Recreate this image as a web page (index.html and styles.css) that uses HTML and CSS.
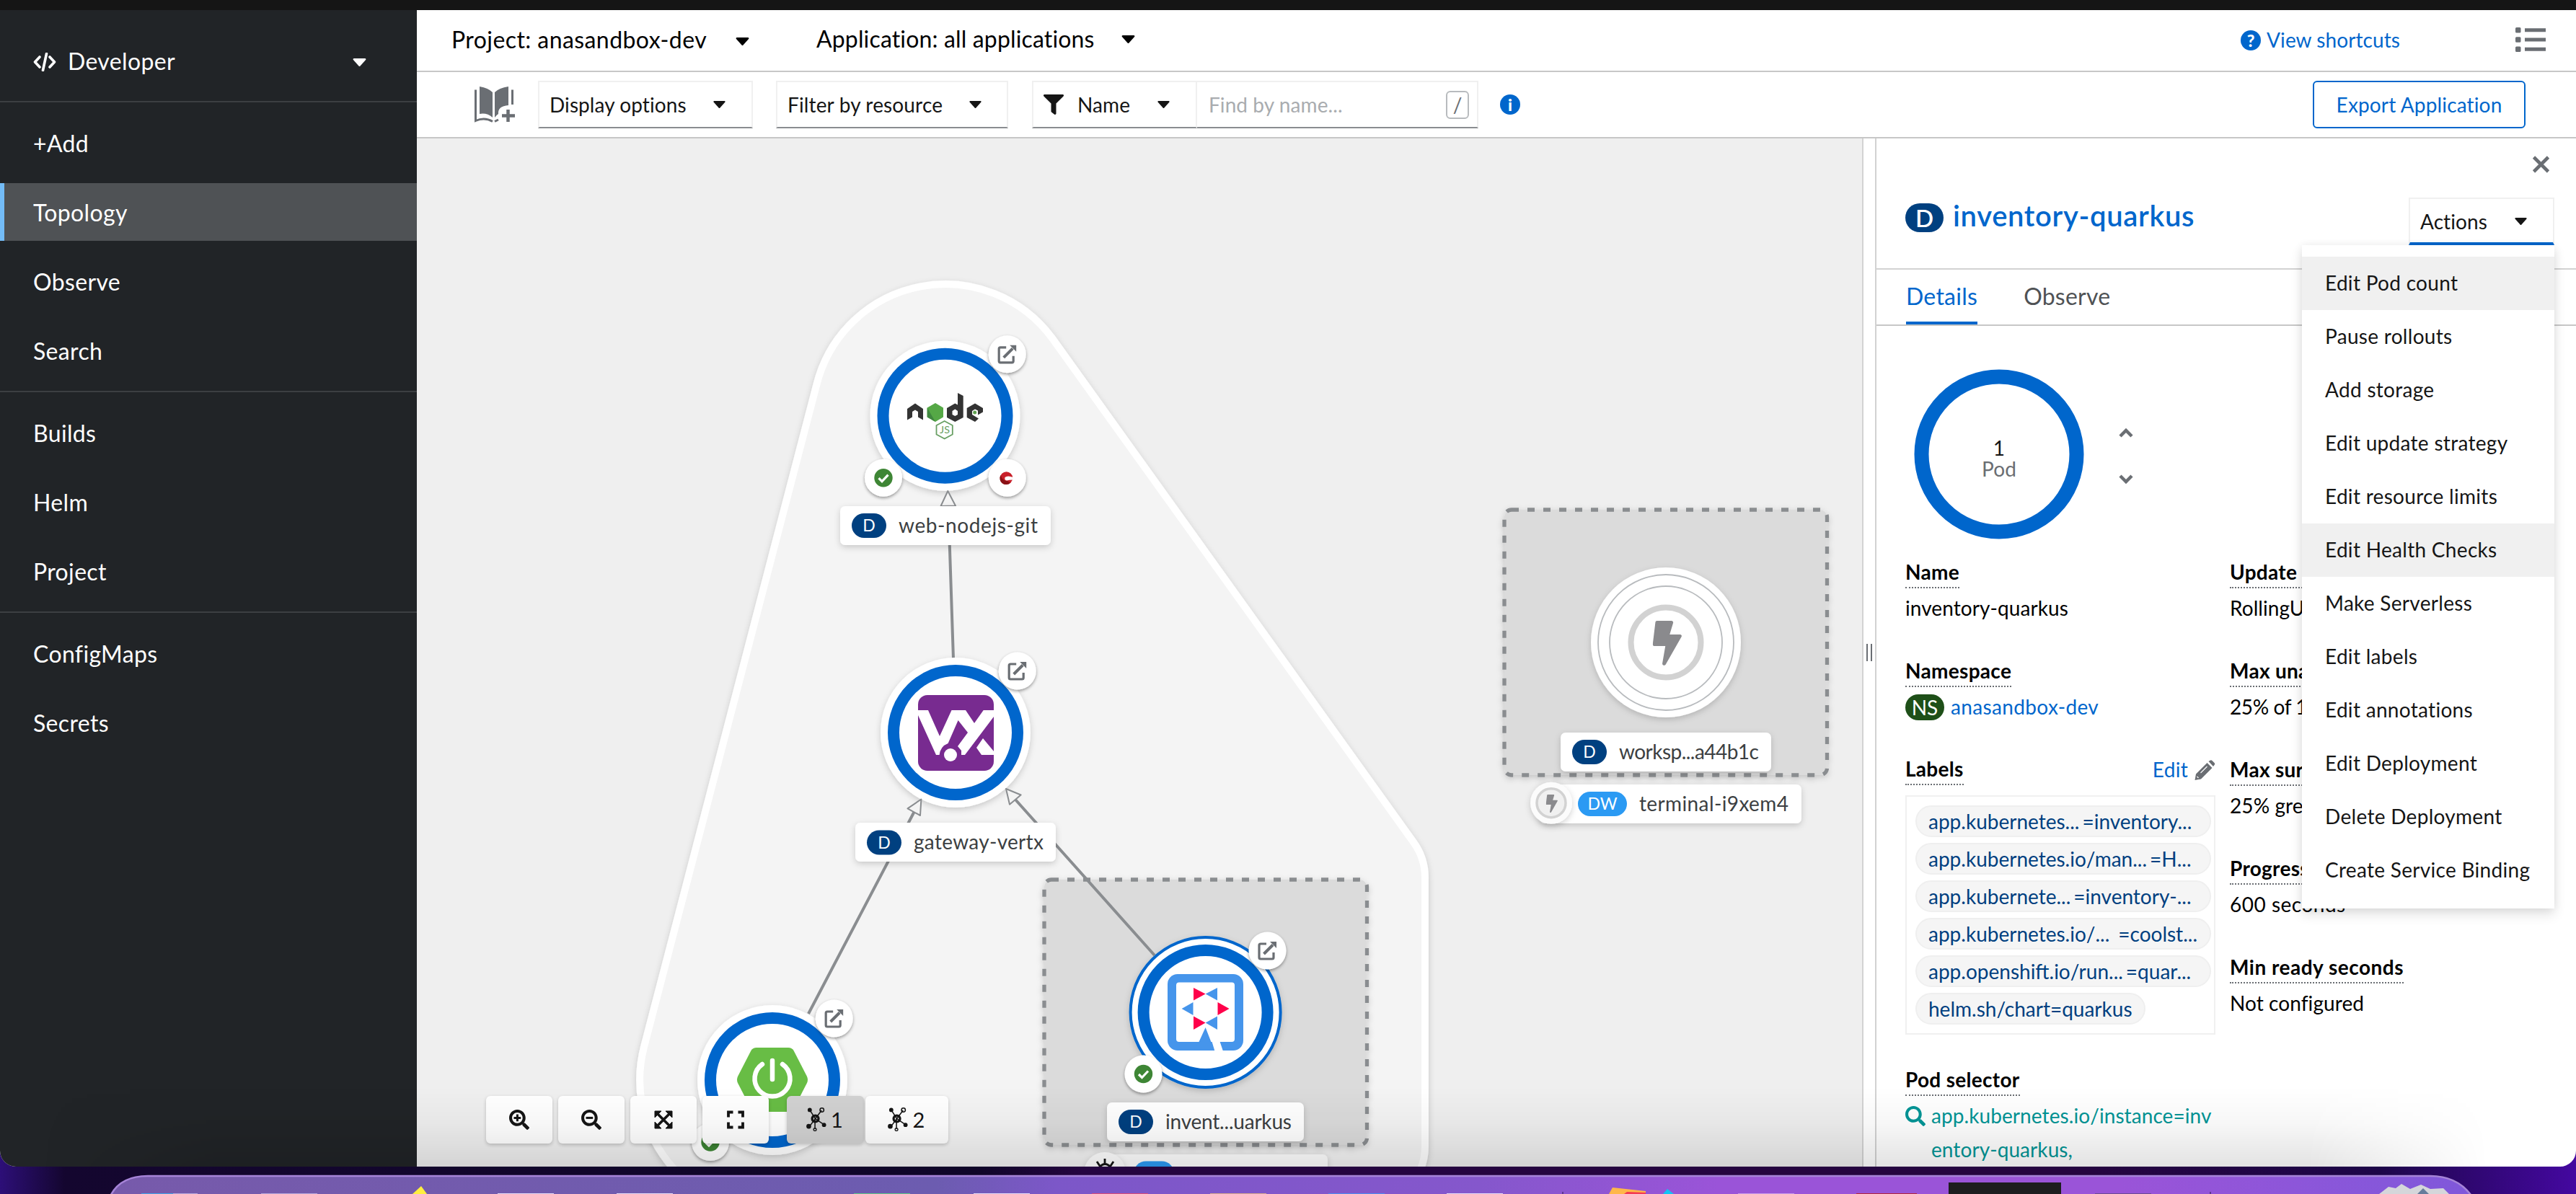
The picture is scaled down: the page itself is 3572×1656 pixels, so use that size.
FILE: index.html
```html
<!DOCTYPE html>
<html lang="en">
<head>
<meta charset="utf-8">
<title>Topology</title>
<link rel="stylesheet" href="styles.css">
</head>
<body>
<svg class="defs" width="0" height="0">
  <defs>
    <symbol id="caret" viewBox="0 0 18 11"><path d="M1.200 0H16.800Q18.500 .4 17.600 2L10 10.400Q9 11.500 8 10.400L.4 2Q-.5 .4 1.200 0Z" fill="currentColor"/></symbol>
    <symbol id="lens" viewBox="0 0 512 512"><path fill="currentColor" d="M505 442.700L405.300 343c-4.500-4.500-10.600-7-17-7H372c27.600-35.300 44-79.700 44-128C416 93.100 322.900 0 208 0S0 93.100 0 208s93.100 208 208 208c48.300 0 92.700-16.400 128-44v16.300c0 6.400 2.500 12.500 7 17l99.700 99.700c9.400 9.400 24.600 9.400 33.900 0l28.300-28.300c9.400-9.400 9.400-24.600.1-34zM208 341c-73 0-133-60-133-133 0-73 60-133 133-133 73 0 133 60 133 133 0 73-60 133-133 133z"/></symbol>
    <symbol id="bolt" viewBox="0 0 40 62"><path fill="currentColor" d="M6 0h20c1.600 0 2.800 1.400 2.300 3L23.500 19H38c1.700 0 2.700 1.800 1.800 3.300L18 60.500c-1.500 2.500-5.200 1-4.600-1.700L17.500 35H2.200C.9 35-.1 33.800 0 32.500L3.700 2C3.800.9 4.800 0 6 0z"/></symbol>
    <g id="link">
      <circle r="26" fill="#fff" filter="url(#lift)"/>
      <path d="M-1.500-9.500H-9.500a2 2 0 0 0-2 2V9.500a2 2 0 0 0 2 2H6.500a2 2 0 0 0 2-2V2.500" fill="none" stroke="#6a6e73" stroke-width="3.200"/>
      <path d="M-5 4.500L7.500-8" stroke="#6a6e73" stroke-width="4"/>
      <path d="M3.500-12.500h9v9z" fill="#6a6e73"/>
    </g>
    <g id="ok">
      <circle r="26" fill="#fff" filter="url(#lift)"/>
      <circle r="12.700" fill="#3e8635"/>
      <path d="M-6.500 .5L-2 5L6.500-4" fill="none" stroke="#fff" stroke-width="3.200"/>
    </g>
    <g id="molecule">
      <path d="M13 17L5 4.500M13 17L22 5M13 17L4 29M13 17L26 26M12.500 17V32" stroke="#151515" stroke-width="1.600"/>
      <circle cx="13" cy="17" r="4.600" fill="none" stroke="#151515" stroke-width="3.400"/>
      <circle cx="5" cy="4.500" r="3" fill="#151515"/><circle cx="22.500" cy="4.500" r="2.800" fill="none" stroke="#151515" stroke-width="1.600"/>
      <circle cx="3.600" cy="28" r="3.400" fill="#151515"/><circle cx="25.500" cy="26" r="3" fill="#151515"/>
      <circle cx="12.500" cy="32.500" r="2" fill="none" stroke="#151515" stroke-width="1.400"/>
    </g>
    <filter id="lift" x="-30%" y="-30%" width="160%" height="160%"><feDropShadow dx="0" dy="2" stdDeviation="2" flood-color="#030303" flood-opacity=".4"/></filter>
    <filter id="soft" x="-20%" y="-20%" width="140%" height="150%"><feDropShadow dx="0" dy="3" stdDeviation="4" flood-color="#030303" flood-opacity=".18"/></filter>
  </defs>
</svg>

<div class="topbar"></div>
<div class="window">
  <nav class="sidebar">
    <div class="perspective">
      <svg class="code-icon" viewBox="0 0 32 26"><path d="M9 6L2.500 13L9 20M23 6L29.500 13L23 20M18.500 1.500L13.500 24.500" fill="none" stroke="#fff" stroke-width="3.600" stroke-linecap="round" stroke-linejoin="round"/></svg>
      <span class="perspective-name">Developer</span>
      <svg class="caret big"><use href="#caret"/></svg>
    </div>
    <ul class="nav-section"><li>+Add</li><li class="current">Topology</li><li>Observe</li><li>Search</li></ul>
    <ul class="nav-section"><li>Builds</li><li>Helm</li><li>Project</li></ul>
    <ul class="nav-section"><li>ConfigMaps</li><li>Secrets</li></ul>
  </nav>

  <main class="main">
    <header class="context-bar">
      <span class="project">Project: anasandbox-dev</span><svg class="caret big"><use href="#caret"/></svg>
      <span class="application">Application: all applications</span><svg class="caret big second"><use href="#caret"/></svg>
      <a class="shortcuts"><span class="round-icon">?</span><span>View shortcuts</span></a>
      <svg class="list-icon" viewBox="0 0 42 34"><path d="M0 1.500Q0 0 1.500 0H6Q7.500 0 7.500 1.500V6Q7.500 7.500 6 7.500H1.500Q0 7.500 0 6ZM0 14.700Q0 13.200 1.500 13.200H6Q7.500 13.200 7.500 14.700V19.200Q7.500 20.700 6 20.700H1.500Q0 20.700 0 19.200ZM0 28Q0 26.500 1.500 26.500H6Q7.500 26.500 7.500 28V32.500Q7.500 34 6 34H1.500Q0 34 0 32.500ZM13 1.200H42V6.300H13ZM13 14.400H42V19.500H13ZM13 27.700H42V32.800H13Z" fill="#6a6e73"/></svg>
    </header>

    <div class="toolbar">
      <svg class="catalog-icon" viewBox="0 0 56 50"><path d="M7 0Q19 2 25 8V43Q17 36 7 38ZM47 0Q34 2 28 8V43Q30 40 33 38Q32 27 47 26Z" fill="#6a6e73"/><path d="M1.500 4.500V47.500Q14 42 25 48.500M52.500 4.500V25M28 48.500L33 46" fill="none" stroke="#6a6e73" stroke-width="3"/><path d="M46.500 32V49M38 40.500H56" stroke="#6a6e73" stroke-width="4.500"/></svg>
      <div class="select display"><span>Display options</span><svg class="caret"><use href="#caret"/></svg></div>
      <div class="select resource"><span>Filter by resource</span><svg class="caret"><use href="#caret"/></svg></div>
      <div class="search-group">
        <div class="select kind"><svg class="funnel" viewBox="0 0 28 28"><path d="M1.300 0H26.700C28 0 28.500 1.500 27.600 2.400L17.500 12.500V26.500C17.500 27.700 16.100 28.400 15.200 27.700L11 24.500Q10.500 24 10.500 23.500V12.500L.4 2.400C-.5 1.500 0 0 1.300 0Z" fill="#151515"/></svg><span>Name</span><svg class="caret"><use href="#caret"/></svg></div>
        <div class="find"><span>Find by name...</span><kbd>/</kbd></div>
      </div>
      <span class="round-icon info">i</span>
      <button class="export">Export Application</button>
    </div>

    <div class="content">
      <section class="canvas">
        <svg class="graph" viewBox="578 192 2004 1426">
          <path d="M1133 531A184 184 0 0 1 1459 469L1960 1168A84 84 0 0 1 1976 1217V1590A84 84 0 0 1 1892 1674L1071 1682A184 184 0 0 1 893 1452Z" fill="#f4f4f4" stroke="#fff" stroke-width="10" filter="url(#soft)"/>

          <g fill="#dbdbdb" stroke="#8a8d90" stroke-width="5.300" stroke-dasharray="10 12" filter="url(#soft)">
            <rect x="1448" y="1220" width="447.500" height="368" rx="10"/>
            <rect x="2086" y="707" width="447.500" height="368" rx="10"/>
          </g>

          <g class="edges">
            <path d="M1322 914L1315 702M1121 1406L1267.600 1126M1601 1325L1408 1109"/>
          </g>

          <!-- web-nodejs-git -->
          <circle cx="1310.500" cy="576.700" r="104" fill="#fff" filter="url(#soft)"/>
          <circle cx="1310.500" cy="576.700" r="86" fill="none" stroke="#06c" stroke-width="16"/>
          <g fill="#333">
            <path d="M1258 567L1269 559.500L1280 567V582.500L1273 578.500V571L1269 568.500L1265 571V578.500L1258 582.500Z"/>
            <path fill-rule="evenodd" d="M1328 545L1335.700 549V579L1324.300 585L1313 579V566L1324.300 559.500L1328 561.500ZM1324.300 567.500L1320.500 570V575L1324.300 577L1328 575V570Z"/>
            <path d="M1352 559.500L1363 566V571.500L1356 575.500V569.500L1352 567.500L1348 570V575L1357 580.500L1352 585L1340.700 579V566Z"/>
          </g>
          <path d="M1297 559L1308 565.500V578.500L1297 585L1285.700 578.500V565.500Z" fill="#55a846"/>
          <path d="M1285.700 565.500L1297 585L1285.700 578.500Z" fill="#3f873f"/>
          <circle cx="1351.700" cy="572" r="2.500" fill="#5fa04e"/>
          <path d="M1309.700 584L1320.800 590V602.500L1309.700 608.500L1298.500 602.500V590Z" fill="#fff" stroke="#689f63" stroke-width="1.800"/>
          <text x="1303" y="601" font-size="13" fill="#689f63" textLength="14" lengthAdjust="spacingAndGlyphs">JS</text>
          <use href="#link" x="1396.700" y="491.300"/>
          <use href="#ok" x="1225" y="662.700"/>
          <circle cx="1396.700" cy="662.700" r="26" fill="#fff" filter="url(#lift)"/>
          <circle cx="1395.500" cy="663" r="8.700" fill="#c9202a"/>
          <path d="M1387.500 659A8.700 8.700 0 0 0 1401 669.700L1397 667Q1390 667 1387.500 659Z" fill="#8a1216"/>
          <path d="M1405 662Q1397 659 1393.500 662Q1392.500 666 1396 666.500Q1399 665.500 1404 665.500Z" fill="#fff"/>

          <!-- gateway-vertx -->
          <circle cx="1325" cy="1016" r="104" fill="#fff" filter="url(#soft)"/>
          <circle cx="1325" cy="1016" r="86" fill="none" stroke="#06c" stroke-width="16"/>
          <rect x="1273" y="964" width="105" height="105" rx="13" fill="#782b90"/>
          <path d="M1273 985H1287L1303 1021L1319.500 985H1339L1351 1003L1363.700 985H1378V994L1338 1047H1333V1041L1328 1035L1342 1016L1328.600 999L1314.600 1031Q1304 1035 1302.600 1047H1298L1273 992ZM1363 1024L1378 1042V1047H1361L1354 1037Z" fill="#fff"/>
          <circle cx="1318" cy="1047" r="9" fill="#fff"/>
          <use href="#link" x="1410.700" y="930.500"/>

          <!-- catalog-spring -->
          <circle cx="1071" cy="1498" r="104" fill="#fff" filter="url(#soft)"/>
          <circle cx="1071" cy="1498" r="86" fill="none" stroke="#06c" stroke-width="16"/>
          <path d="M1049 1453H1093Q1098 1453 1100.500 1457L1119 1493Q1121 1497.500 1119 1502L1100.500 1538Q1098 1542 1093 1542H1049Q1044 1542 1041.500 1538L1023 1502Q1021 1497.500 1023 1493L1041.500 1457Q1044 1453 1049 1453Z" fill="#68bd45"/>
          <path d="M1057 1476A24.500 24.500 0 1 0 1085 1476M1071 1471V1497" fill="none" stroke="#fff" stroke-width="6.500" stroke-linecap="round"/>
          <use href="#link" x="1156.700" y="1412.500"/>
          <use href="#ok" x="985" y="1584"/>

          <!-- inventory-quarkus -->
          <circle cx="1671.600" cy="1404" r="104" fill="#fff" stroke="#06c" stroke-width="4" filter="url(#soft)"/>
          <circle cx="1671.600" cy="1404" r="86" fill="none" stroke="#06c" stroke-width="16"/>
          <rect x="1619" y="1351" width="105" height="106" rx="14" fill="#4695eb"/>
          <rect x="1631" y="1362.500" width="81" height="82.500" rx="4" fill="#fff"/>
          <path d="M1671.600 1425L1684 1457H1655L1662.500 1445Z" fill="#4695eb"/>
          <path d="M1686.500 1443H1691L1696 1458H1684.500L1680 1443Z" fill="#fff"/>
          <path d="M1655 1370V1387.500L1671.600 1378.500ZM1704.600 1399L1688.500 1390V1408ZM1655 1409.500V1428L1671.600 1418.500Z" fill="#ff004a"/>
          <path d="M1688 1370V1387.500L1671.600 1378.500ZM1638.600 1399L1654.500 1390V1408ZM1688 1409.500V1428L1671.600 1418.500Z" fill="#4695eb"/>
          <use href="#link" x="1757.500" y="1318.500"/>
          <use href="#ok" x="1585.500" y="1489.500"/>

          <!-- workspace terminal -->
          <circle cx="2310" cy="891" r="104" fill="#fff" filter="url(#soft)"/>
          <g fill="none" stroke="#b8bbbe" stroke-width="1.800"><circle cx="2310" cy="891" r="94"/><circle cx="2310" cy="891" r="78"/></g>
          <circle cx="2310" cy="891" r="48.500" fill="none" stroke="#d2d2d2" stroke-width="8"/>
          <svg x="2291.500" y="861" width="40.500" height="62" color="#8a8a8d"><use href="#bolt"/></svg>

          <g class="arrows">
            <path d="M1314.300 681L1325 701.500L1304.500 702ZM1277.400 1108.500L1276 1131L1258.500 1121.400ZM1395 1094L1415.600 1102.500L1400 1115.700Z"/>
          </g>

          <g fill="#fff" filter="url(#soft)">
            <rect x="1165" y="702" width="292" height="54" rx="7"/>
            <rect x="1186" y="1141" width="278" height="54" rx="7"/>
            <rect x="1535" y="1529" width="273" height="54" rx="7"/>
            <rect x="2164" y="1016" width="292" height="54" rx="7"/>
            <rect x="2135" y="1088" width="363" height="54" rx="7"/>
            <rect x="1530" y="1601" width="311" height="54" rx="7"/>
          </g>
          <circle cx="2151" cy="1113.700" r="29" fill="#fcfcfc" filter="url(#soft)"/>
          <circle cx="2151" cy="1113.700" r="20" fill="#f0f0f0" stroke="#d2d2d2" stroke-width="3.500"/>
          <svg x="2143.500" y="1102" width="16.500" height="25" color="#8a8a8d"><use href="#bolt"/></svg>
          <circle cx="1532" cy="1627" r="29" fill="#fff" filter="url(#soft)"/>
          <path d="M1523 1621Q1532 1608 1542 1621M1532 1607V1616M1521 1611L1525 1617M1544 1611L1540 1617" fill="none" stroke="#151515" stroke-width="2.800"/>
          <g fill="#004080">
            <rect x="1181" y="712" width="48" height="34" rx="17"/>
            <rect x="1202" y="1151.500" width="48" height="34" rx="17"/>
            <rect x="1551" y="1539" width="48" height="34" rx="17"/>
            <rect x="2180" y="1026" width="48" height="34" rx="17"/>
          </g>
          <rect x="2188" y="1098" width="68" height="34" rx="17" fill="#2b9af3"/>
          <rect x="1572" y="1610.500" width="56" height="34" rx="17" fill="#2b9af3"/>
          <g class="badge-text">
            <text x="1205" y="737">D</text><text x="1226" y="1176.500">D</text><text x="1575" y="1564">D</text><text x="2204" y="1051">D</text><text x="2222" y="1123">DW</text>
          </g>
          <g class="label-text">
            <text x="1246" y="739" textLength="193">web-nodejs-git</text>
            <text x="1267" y="1178" textLength="180">gateway-vertx</text>
            <text x="1616" y="1566" textLength="175">invent...uarkus</text>
            <text x="2245" y="1053" textLength="194">worksp...a44b1c</text>
            <text x="2273" y="1125" textLength="207">terminal-i9xem4</text>
          </g>
        </svg>

        <div class="controls">
          <button><svg viewBox="0 0 28 28"><use href="#lens" width="28" height="28"/><path d="M11.400 6.500V16.200M6.500 11.400H16.200" stroke="#151515" stroke-width="3"/></svg></button>
          <button><svg viewBox="0 0 28 28"><use href="#lens" width="28" height="28"/><path d="M6.500 11.400H16.200" stroke="#151515" stroke-width="3"/></svg></button>
          <button><svg viewBox="0 0 28 28"><path d="M5 5L23 23M23 5L5 23" stroke="#151515" stroke-width="3.600"/><path d="M2 2H11L2 11ZM26 2H17L26 11ZM2 26H11L2 17ZM26 26H17L26 17Z" fill="#151515" stroke="#151515" stroke-linejoin="round"/></svg></button>
          <button><svg viewBox="0 0 28 28"><path d="M4 10.500V3.500H10.500M17.500 3.500H24V10.500M24 17.500V24.500H17.500M10.500 24.500H4V17.500" fill="none" stroke="#151515" stroke-width="3.800"/></svg></button>
          <button class="layout on"><svg viewBox="0 0 29 35"><use href="#molecule"/></svg>1</button>
          <button class="layout"><svg viewBox="0 0 29 35"><use href="#molecule"/></svg>2</button>
        </div>
      </section>

      <div class="splitter"><i></i></div>

      <aside class="panel">
        <div class="panel-top"><svg class="close" viewBox="0 0 24 24"><path d="M2 2L22 22M22 2L2 22" stroke="#6a6e73" stroke-width="4.600"/></svg></div>
        <div class="panel-head">
          <span class="badge d">D</span>
          <h1>inventory-quarkus</h1>
          <div class="actions">
            <div class="actions-toggle"><span>Actions</span><svg class="caret"><use href="#caret"/></svg></div>
            <ul class="menu">
              <li class="hover">Edit Pod count</li><li>Pause rollouts</li><li>Add storage</li><li>Edit update strategy</li><li>Edit resource limits</li><li class="hover">Edit Health Checks</li><li>Make Serverless</li><li>Edit labels</li><li>Edit annotations</li><li>Edit Deployment</li><li>Delete Deployment</li><li>Create Service Binding</li>
            </ul>
          </div>
        </div>
        <div class="tabs"><span class="active">Details</span><span>Observe</span></div>
        <div class="panel-body">
          <svg class="pod" viewBox="0 0 330 320">
            <circle cx="130" cy="178" r="107.500" fill="none" stroke="#06c" stroke-width="20"/>
            <text x="130" y="180" fill="#151515">1</text><text x="130" y="209" fill="#6a6e73">Pod</text>
            <path d="M298 153L306 145L314 153M298 208L306 216L314 208" fill="none" stroke="#6a6e73" stroke-width="4.500"/>
          </svg>
          <div class="details">
            <dl>
              <dt><span>Name</span></dt><dd>inventory-quarkus</dd>
              <dt><span>Namespace</span></dt><dd class="ns"><span class="badge n">NS</span><a>anasandbox-dev</a></dd>
              <dt class="with-edit"><span>Labels</span><a>Edit <svg viewBox="0 0 28 28"><path d="M0 28L1.500 19.500L17 4L24 11L8.500 26.500ZM19 2L21 .8Q22.500-.5 24 1L27 4Q28.500 5.500 27 7L25.500 9Z" fill="#6a6e73"/><path d="M8 18L17 9M3 23L5 25" stroke="#fff" stroke-width="1.100"/></svg></a></dt>
              <dd class="labels">
                <span class="chip full"><b>app.kubernetes...</b><b>=inventory...</b></span>
                <span class="chip full"><b>app.kubernetes.io/man...</b><b>=H...</b></span>
                <span class="chip full"><b>app.kubernete...</b><b>=inventory-...</b></span>
                <span class="chip full wide"><b>app.kubernetes.io/...</b><b>=coolst...</b></span>
                <span class="chip full"><b>app.openshift.io/run...</b><b>=quar...</b></span>
                <span class="chip"><b>helm.sh/chart=quarkus</b></span>
              </dd>
              <dt><span>Pod selector</span></dt>
              <dd class="selector"><svg><use href="#lens"/></svg><a>app.kubernetes.io/instance=inv<br>entory-quarkus,</a></dd>
            </dl>
            <dl>
              <dt><span>Update strategy</span></dt><dd>RollingUpdate</dd>
              <dt><span>Max unavailable</span></dt><dd class="tight">25% of 1 pod</dd>
              <dt><span>Max surge</span></dt><dd>25% greater than 1 pod</dd>
              <dt><span>Progress deadline</span></dt><dd class="loose">600 seconds</dd>
              <dt><span class="loose">Min ready seconds</span></dt><dd>Not configured</dd>
            </dl>
          </div>
        </div>
      </aside>
    </div>
  </main>
</div>

<footer class="desktop">
  <svg viewBox="0 0 3572 38">
    <defs><linearGradient id="dock"><stop offset="0" stop-color="#775aab"/><stop offset=".35" stop-color="#6c5cb0"/><stop offset=".4" stop-color="#7c57c8"/><stop offset=".58" stop-color="#8557cc"/><stop offset=".68" stop-color="#9a54d8"/><stop offset=".85" stop-color="#9a54d8"/><stop offset="1" stop-color="#7f58da"/></linearGradient></defs>
    <path d="M150 48Q162 13 205 13H3370Q3412 13 3432 48Z" fill="url(#dock)" stroke="#a684d8" stroke-width="2.500"/>
    <path d="M572 38L584 27L592 38Z" fill="#ffef3f"/>
    <path d="M2231 38L2236 29L2282 34V38Z" fill="#ffb74a"/><path d="M2256 35L2282 36V38H2252Z" fill="#f33b55"/><path d="M2306 38L2312 31L2321 38Z" fill="#12c4f4"/>
    <rect x="2702" y="22" width="156" height="16" fill="#1d1d1f"/>
    <path d="M3299 38L3312 28L3322 30L3330 24L3342 31L3357 25L3370 31L3388 30L3396 38Z" fill="#d5d6da"/><path d="M3352 38L3360 30L3368 38Z" fill="#667c9c"/>
    <g><rect x="196" y="37" width="44" height="1" fill="#42a5e8"/><rect x="240" y="37" width="34" height="1" fill="#b7a8dc"/><rect x="362" y="37" width="78" height="1" fill="#b7a8dc"/><rect x="690" y="37" width="78" height="1" fill="#e6dcf8"/><rect x="855" y="37" width="78" height="1" fill="#e6dcf8"/><rect x="1184" y="37" width="78" height="1" fill="#5fc987"/><rect x="1350" y="37" width="78" height="1" fill="#e6dcf8"/><rect x="1514" y="37" width="78" height="1" fill="#de4f77"/><rect x="1678" y="37" width="78" height="1" fill="#d9ac8d"/><rect x="1842" y="37" width="78" height="1" fill="#4d8df0"/><rect x="2006" y="37" width="78" height="1" fill="#e6dcf8"/><rect x="2410" y="37" width="78" height="1" fill="#c99bea"/><rect x="2574" y="37" width="84" height="1" fill="#b3243c"/><rect x="2905" y="37" width="78" height="1" fill="#6b4a94"/><rect x="2166" y="35" width="2" height="3" fill="#5d3690"/><rect x="3064" y="35" width="2" height="3" fill="#5d3690"/></g>
  </svg>
</footer>
</body>
</html>
```
FILE: styles.css
```css
* { box-sizing: border-box; }
body {
  margin: 0;
  width: 3572px;
  height: 1656px;
  overflow: hidden;
  display: flex;
  flex-direction: column;
  background: linear-gradient(90deg, #2d0f78 0, #14062f 90px, #0f0628 1350px, #250540 1500px, #250540 2900px, #1d0648 3300px, #4408a0 3572px);
  font: 28px/42px Lato, sans-serif;
  letter-spacing: 0.08px;
  color: #151515;
}
ul, dl, dd, h1 { margin: 0; padding: 0; list-style: none; }
svg { display: block; flex: none; }
button { font: inherit; letter-spacing: inherit; color: inherit; }
.defs { position: absolute; }
a { color: #06c; }

.topbar { height: 14px; background: #151515; flex: none; }
.window {
  position: relative;
  height: 1604px;
  flex: none;
  display: flex;
  border-radius: 0 0 22px 22px;
  overflow: hidden;
  background: #fff;
}
/* shade along the lower edge of the window */
.window::after {
  content: "";
  position: absolute;
  inset: auto 0 0 0;
  height: 110px;
  background: linear-gradient(rgba(0,0,0,0), rgba(0,0,0,.03) 45%, rgba(0,0,0,.11));
  -webkit-mask-image: linear-gradient(90deg, transparent 60px, #000 300px, #000 3200px, transparent 3450px);
  mask-image: linear-gradient(90deg, transparent 60px, #000 300px, #000 3200px, transparent 3450px);
  pointer-events: none;
}

.caret { width: 17px; height: 10px; }
.caret.big { width: 19px; height: 11px; }

.sidebar { width: 578px; flex: none; background: #212427; color: #fff; font-size: 32px; letter-spacing: 0.35px; }
.perspective { height: 126px; display: flex; align-items: flex-start; padding: 30px 70px 0 46px; }
.code-icon { width: 32px; height: 26px; margin-top: 29px; }
.perspective-name { margin-left: 16px; line-height: 82px; }
.perspective .caret { margin: 37px 0 0 auto; }
.nav-section { border-top: 2px solid #3c3f42; padding: 16px 0; display: flex; flex-direction: column; gap: 16px; }
.nav-section li { height: 80px; line-height: 82px; padding-left: 46px; }
.nav-section .current { background: #4f5255; box-shadow: inset 6px 0 #73bcf7; }

.main { flex: 1; min-width: 0; display: flex; flex-direction: column; }
.context-bar { height: 86px; border-bottom: 2px solid #c7c7c7; display: flex; align-items: flex-start; padding: 0 42px 0 48px; font-size: 32px; color: #000; }
.project { width: 394px; line-height: 82px; letter-spacing: 0.42px; }
.application { width: 423px; margin-left: 93px; line-height: 79px; letter-spacing: 0.15px; }
.context-bar .caret { margin-top: 38px; }
.context-bar .second { margin-top: 35px; }
.shortcuts { margin-left: auto; display: flex; gap: 8px; font-size: 28px; line-height: 83px; }
.round-icon { width: 28px; height: 28px; border-radius: 50%; background: #06c; color: #fff; font: 900 23px/28px Lato, sans-serif; text-align: center; letter-spacing: 0; }
.shortcuts .round-icon { margin-top: 28px; }
.list-icon { width: 42px; height: 34px; margin: 24px 0 0 160px; }

.toolbar { height: 92px; border-bottom: 2px solid #c7c7c7; display: flex; align-items: flex-start; padding: 12px 70px 0 80px; }
.catalog-icon { width: 56px; height: 50px; margin: 8px 32px 0 0; }
.select { height: 66px; border: 2px solid #f0f0f0; border-bottom-color: #8a8d90; display: flex; align-items: center; justify-content: space-between; padding: 0 36px 0 14px; line-height: 62px; }
.display { width: 298px; }
.resource { width: 322px; margin-left: 32px; padding: 0 35px 0 14px; letter-spacing: 0.15px; }
.search-group { display: flex; margin-left: 33px; }
.kind { width: 229px; }
.kind .funnel { width: 28px; height: 28px; margin-right: 19px; }
.kind .caret { margin-left: auto; }
.find { width: 390px; height: 66px; border: 2px solid #f0f0f0; border-left: 0; border-bottom-color: #8a8d90; display: flex; align-items: center; justify-content: space-between; padding: 0 11px 0 16px; color: #a9acaf; line-height: 62px; }
.find kbd { width: 32px; height: 39px; border: 2px solid #b8bbbe; border-radius: 6px; color: #6a6e73; font: 28px/34px Lato, sans-serif; text-align: center; }
.info { margin: 19px 0 0 30px; }
.export { margin-left: auto; width: 295px; height: 66px; padding: 0; border: 2px solid #06c; border-radius: 6px; background: #fff; color: #06c; letter-spacing: 0.15px; }

.content { flex: 1; display: flex; min-height: 0; }
.canvas { position: relative; width: 2004px; flex: none; background: #efefef; overflow: hidden; }
.graph { width: 2004px; height: 1426px; font-family: Lato, sans-serif; }
.edges { fill: none; stroke: #8a8d90; stroke-width: 4px; }
.arrows { fill: #f4f4f4; stroke: #8a8d90; stroke-width: 2px; stroke-linejoin: round; }
.badge-text { fill: #fff; font-size: 23px; text-anchor: middle; }
.label-text { fill: #3c3f42; font-size: 28px; }

/* floating controls over the graph */
.controls { position: absolute; left: 96px; bottom: 32px; display: flex; gap: 8px; }
.controls button { width: 92px; height: 66px; padding: 0; border: 0; border-radius: 6px; background: #fff; box-shadow: 0 2px 5px rgba(3,3,3,.2); display: flex; align-items: center; justify-content: center; color: #151515; }
.controls button > svg { width: 28px; height: 28px; }
.controls .layout { width: 115px; gap: 7px; font-size: 29px; margin-left: -6px; padding-right: 2px; }
.controls .on { width: 107px; background: #d2d2d2; margin-left: 17px; gap: 6px; }
.controls .layout > svg { width: 28px; height: 34px; margin-top: -2px; }

.splitter { width: 20px; flex: none; border: solid #d2d2d2; border-width: 0 2px; display: flex; align-items: center; justify-content: center; background: #fff; }
.splitter i { width: 8px; height: 24px; border: solid #6a6e73; border-width: 0 2px; }

.panel { flex: 1; min-width: 0; }
.panel-top { height: 76px; display: flex; justify-content: flex-end; padding: 24px 36px 0 0; }
.close { width: 25px; height: 24px; }
.panel-head { height: 106px; border-bottom: 2px solid #d2d2d2; display: flex; align-items: flex-start; padding: 0 30px 0 40px; }
.badge { border-radius: 20px; color: #fff; text-align: center; letter-spacing: 0; }
.badge.d { width: 53px; height: 40px; margin-top: 14px; background: #004080; font-size: 33px; line-height: 40px; font-weight: 600; }
.badge.n { width: 54px; height: 36px; margin-top: 3px; background: #1e4f18; line-height: 36px; }
.panel-head h1 { margin-left: 13px; font-size: 40px; font-weight: 600; line-height: 63px; color: #06c; letter-spacing: 0.65px; }
.actions { position: relative; margin: 6px 0 0 auto; }
.actions-toggle { width: 202px; height: 66px; border: 2px solid #f0f0f0; border-bottom: 4px solid #06c; display: flex; align-items: center; justify-content: space-between; padding: 2px 36px 0 14px; background: #fff; }
.menu { position: absolute; z-index: 2; top: 66px; right: 0; width: 350px; padding: 16px 0; background: #fff; box-shadow: 0 8px 16px rgba(3,3,3,.12), 0 0 12px rgba(3,3,3,.06); }
.menu li { height: 74px; line-height: 73px; padding-left: 32px; letter-spacing: 0.3px; white-space: nowrap; }
.menu .hover { background: #f0f0f0; }

.tabs { height: 78px; border-bottom: 2px solid #c7c7c7; padding-left: 41px; display: flex; gap: 64px; font-size: 32px; line-height: 73px; color: #4f5255; letter-spacing: 0.25px; }
.tabs .active { color: #06c; box-shadow: inset 0 -4px #06c; height: 76px; }

.panel-body { padding-left: 40px; color: #000; }
.pod { width: 330px; height: 320px; text-anchor: middle; }
.details { display: grid; grid-template-columns: 430px 440px; gap: 20px; }
dt { height: 50px; font-weight: 700; letter-spacing: 0.3px; }
dt > span { display: inline-block; line-height: 41px; border-bottom: 2px dotted #6a6e73; white-space: nowrap; }
dd { min-height: 42px; margin-bottom: 45px; white-space: nowrap; }
.loose { letter-spacing: 0.5px; }
.tight { letter-spacing: -0.4px; }
.ns { display: flex; gap: 9px; height: 42px; margin-bottom: 45px; letter-spacing: 0.35px; }
.ns .badge { margin-top: 4px; }
.with-edit { display: flex; justify-content: space-between; align-items: flex-start; }
.with-edit a { display: flex; gap: 9px; font-weight: 400; }
.with-edit a svg { width: 29px; height: 28px; margin-top: 8px; }
.labels { margin: 7px 0 41px; border: 2px solid #f0f0f0; padding: 12px; display: flex; flex-direction: column; gap: 8px; align-items: flex-start; }
.chip { height: 44px; border: 2px solid #efefef; border-radius: 22px; background: #f5f5f5; color: #004080; padding: 0 16px; line-height: 40px; display: flex; gap: 4px; letter-spacing: 0; }
.chip b { font-weight: 400; }
.chip.full { width: 410px; }
.chip.wide { gap: 12px; }
.selector { display: flex; gap: 8px; color: #009596; line-height: 47px; margin: 0; }
.selector a { color: inherit; margin-top: -2px; }
.selector svg { width: 28px; height: 28px; margin-top: 8px; }

.desktop { height: 38px; flex: none; }
.desktop svg { width: 3572px; height: 38px; }
```
